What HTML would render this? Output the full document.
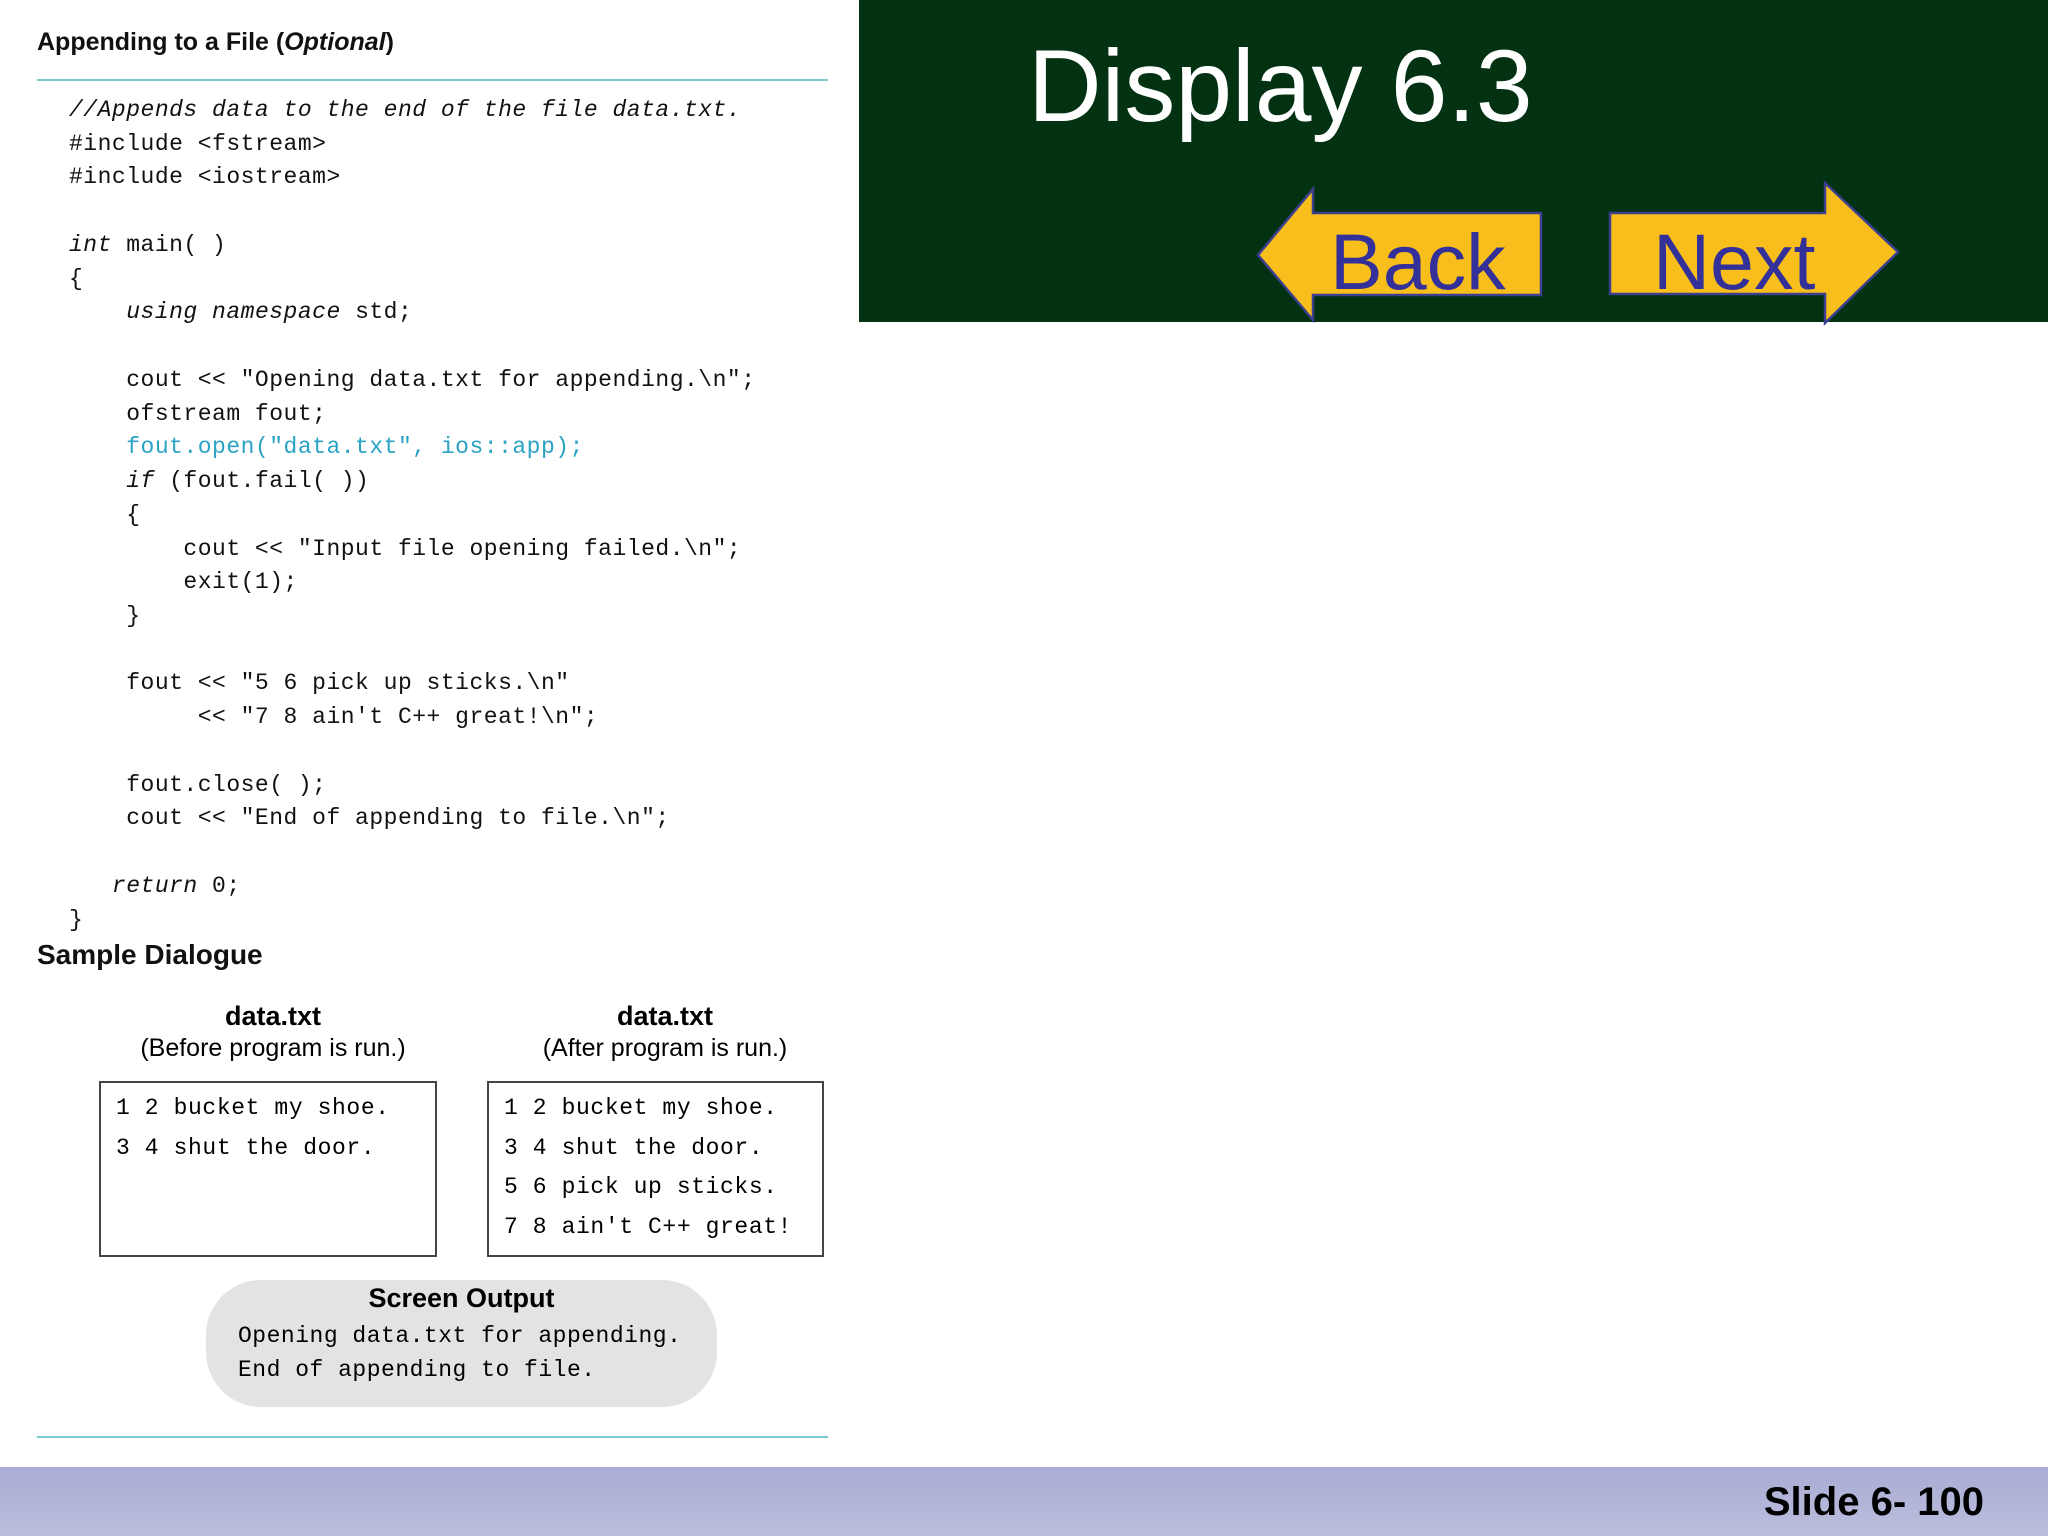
<!DOCTYPE html>
<html><head><meta charset="utf-8"><style>
*{margin:0;padding:0}
body{width:2048px;height:1536px;position:relative;background:#fff;overflow:hidden;font-family:"Liberation Sans",sans-serif}
.a{position:absolute;white-space:pre}
.m{font-family:"Liberation Mono",monospace}
#code{position:absolute;left:69px;top:94px;font-size:23px;line-height:33.73px;color:#111;white-space:pre;font-family:"Liberation Mono",monospace;letter-spacing:0.5px}
i{font-style:italic}
.c{color:#2aa3c5}
</style></head><body>
<div class="a" style="left:37px;top:28px;font-size:25px;font-weight:bold;color:#111">Appending to a File (<i>Optional</i>)</div>
<div class="a" style="left:37px;top:79px;width:791px;height:2px;background:#7cc7d0"></div>
<div id="code"><i>//Appends data to the end of the file data.txt.</i>
#include &lt;fstream&gt;
#include &lt;iostream&gt;

<i>int</i> main( )
{
    <i>using namespace</i> std;

    cout &lt;&lt; "Opening data.txt for appending.\n";
    ofstream fout;
    <span class="c">fout.open("data.txt", ios::app);</span>
    <i>if</i> (fout.fail( ))
    {
        cout &lt;&lt; "Input file opening failed.\n";
        exit(1);
    }

    fout &lt;&lt; "5 6 pick up sticks.\n"
         &lt;&lt; "7 8 ain't C++ great!\n";

    fout.close( );
    cout &lt;&lt; "End of appending to file.\n";

   <i>return</i> 0;
}</div>
<div class="a" style="left:37px;top:939px;font-size:28px;font-weight:bold;color:#111">Sample Dialogue</div>
<div class="a" style="left:173px;top:1001px;width:200px;text-align:center;font-size:27px;font-weight:bold">data.txt</div>
<div class="a" style="left:123px;top:1034px;width:300px;text-align:center;font-size:25px">(Before program is run.)</div>
<div class="a" style="left:565px;top:1001px;width:200px;text-align:center;font-size:27px;font-weight:bold">data.txt</div>
<div class="a" style="left:515px;top:1034px;width:300px;text-align:center;font-size:25px">(After program is run.)</div>
<div class="a m" style="left:99px;top:1081px;width:338px;height:176px;border:2px solid #444;box-sizing:border-box;padding:6px 0 0 15px;font-size:23px;line-height:39.5px;letter-spacing:0.6px">1 2 bucket my shoe.
3 4 shut the door.</div>
<div class="a m" style="left:487px;top:1081px;width:337px;height:176px;border:2px solid #444;box-sizing:border-box;padding:6px 0 0 15px;font-size:23px;line-height:39.5px;letter-spacing:0.6px">1 2 bucket my shoe.
3 4 shut the door.
5 6 pick up sticks.
7 8 ain't C++ great!</div>
<div class="a" style="left:206px;top:1280px;width:511px;height:127px;background:#e3e3e3;border-radius:55px"></div>
<div class="a" style="left:206px;top:1283px;width:511px;text-align:center;font-size:27px;font-weight:bold">Screen Output</div>
<div class="a m" style="left:238px;top:1319px;font-size:23px;line-height:34px;letter-spacing:0.5px">Opening data.txt for appending.
End of appending to file.</div>
<div class="a" style="left:37px;top:1436px;width:791px;height:2px;background:#7cc7d0"></div>

<div class="a" style="left:859px;top:0;width:1189px;height:322px;background:#033212"></div>
<div class="a" style="left:1028px;top:28px;font-size:102px;color:#fff">Display 6.3</div>
<svg class="a" style="left:0;top:0" width="2048" height="340">
<polygon points="1258,255 1313,189 1313,213 1541,213 1541,295 1313,295 1313,320" fill="#f8be1c" stroke="#3b3f8e" stroke-width="2.5"/>
<polygon points="1610,213 1825,213 1825,183 1898,252 1825,323 1825,294 1610,294" fill="#f8be1c" stroke="#3b3f8e" stroke-width="2.5"/>
<text x="1330" y="289" font-family="Liberation Sans" font-size="79" fill="#33309a">Back</text>
<text x="1653" y="289" font-family="Liberation Sans" font-size="79" fill="#33309a">Next</text>
</svg>

<div class="a" style="left:0;top:1467px;width:2048px;height:69px;background:linear-gradient(#a9acd4,#bcbedd)"></div>
<div class="a" style="right:64px;top:1480px;font-size:40px;font-weight:bold;color:#000">Slide 6- 100</div>
</body></html>
